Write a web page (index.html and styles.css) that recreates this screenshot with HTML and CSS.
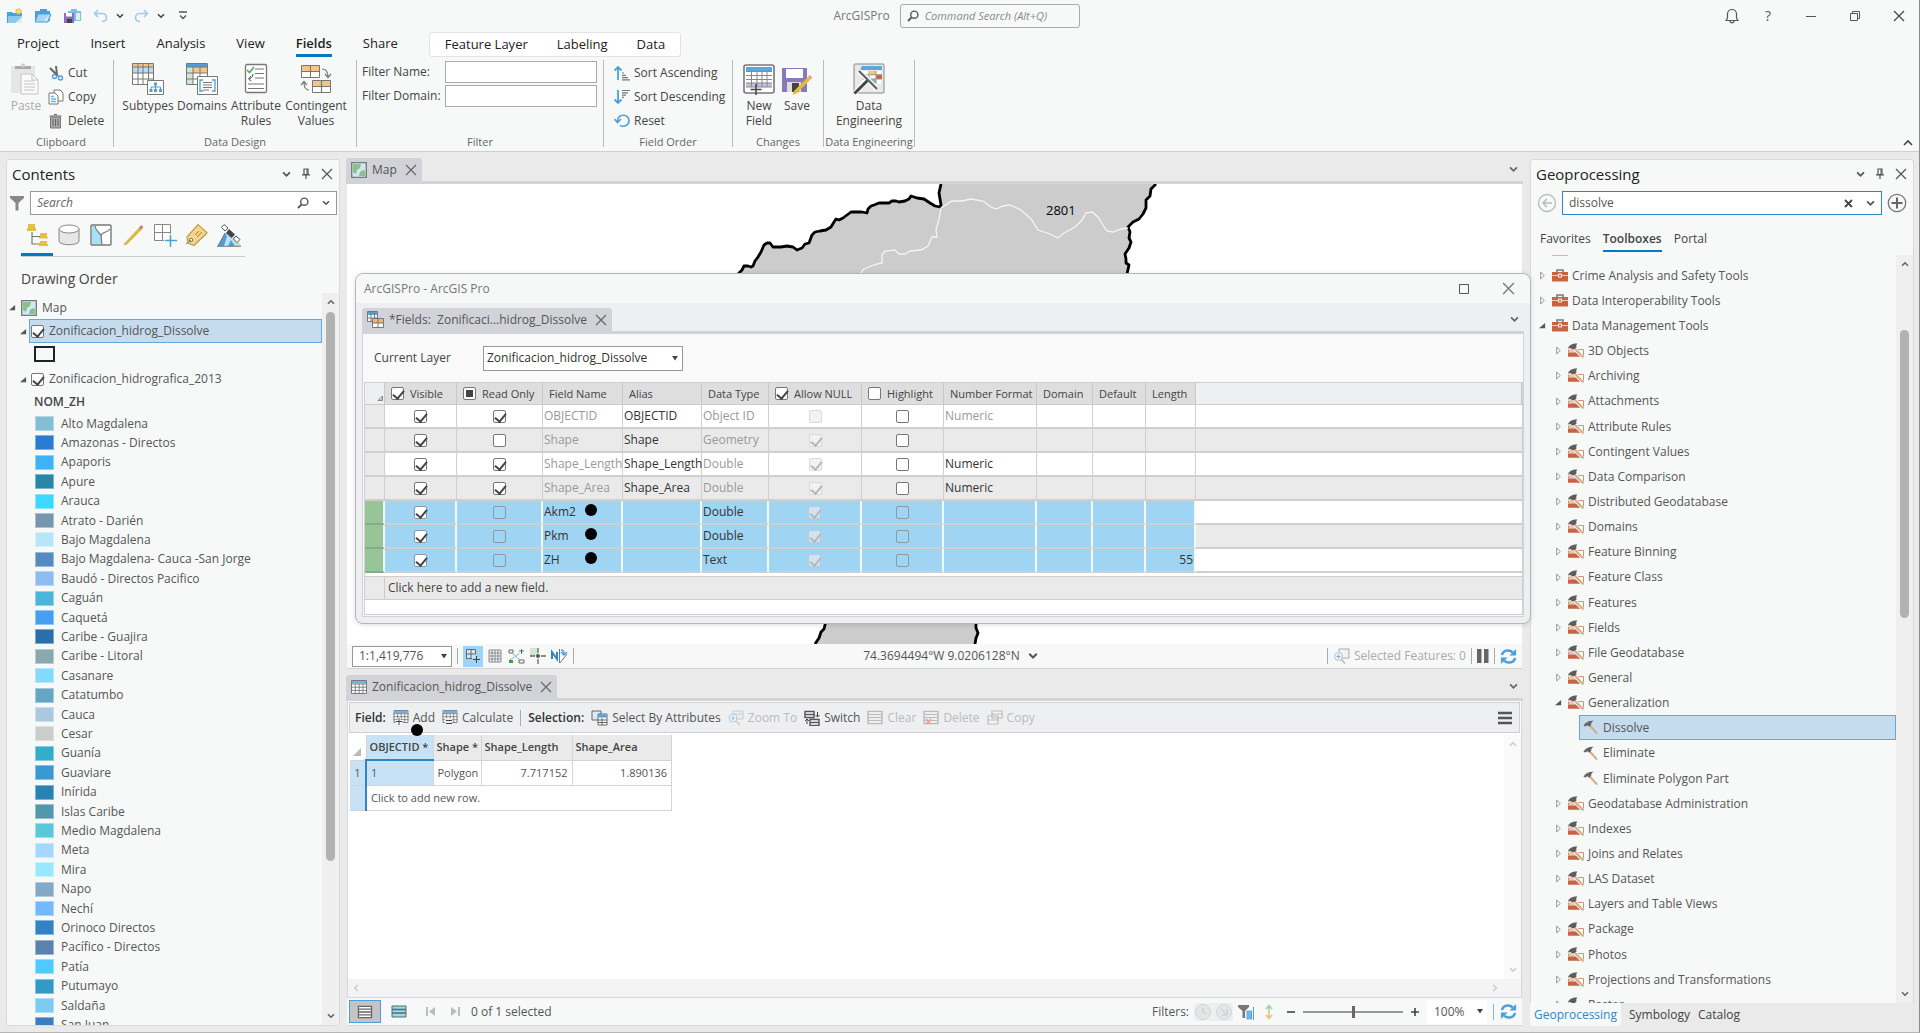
FILE: index.html
```html
<!DOCTYPE html>
<html lang="en">
<head>
<meta charset="utf-8">
<title>ArcGISPro</title>
<link rel="stylesheet" href="styles.css">
</head>
<body>
<svg class="defs" aria-hidden="true">
  <symbol id="chev" viewBox="0 0 8 8"><path d="M1 2.2l3 3 3-3" fill="none" stroke="currentColor" stroke-width="1.6"/></symbol>
  <symbol id="x" viewBox="0 0 12 12"><path d="M1 1l10 10m0-10L1 11" fill="none" stroke="currentColor" stroke-width="1.2"/></symbol>
  <symbol id="pin" viewBox="0 0 8 12"><path d="M2 1h4v5.5H2zM0 6.8h8M4 7v4" fill="none" stroke="currentColor" stroke-width="1.2"/><path d="M5 1v6" stroke="currentColor"/></symbol>
  <symbol id="lens" viewBox="0 0 12 12"><circle cx="7.3" cy="4.7" r="3.6" fill="none" stroke="currentColor" stroke-width="1.4"/><path d="M4.6 7.4L1 11" stroke="currentColor" stroke-width="1.8"/></symbol>
  <symbol id="refresh" viewBox="0 0 18 18"><path d="M2 7.5C3 2.5 9.500 1 13.500 4.600" fill="none" stroke="#4a9fdc" stroke-width="2.6"/><path d="M17 1v7h-7z" fill="#4a9fdc"/><path d="M16 10.500c-1 5-7.500 6.500-11.500 3" fill="none" stroke="#4a9fdc" stroke-width="2.600"/><path d="M1 17v-7h7z" fill="#4a9fdc"/></symbol>
  <symbol id="case" viewBox="0 0 16 14"><path d="M5 4V1.500h6V4" fill="none" stroke="#777" stroke-width="1.500"/><path d="M0 3.500h16V13H0z" fill="#c96442"/><path d="M0 7h16" stroke="#f0c9bb"/><path d="M6.500 5.500h3v3h-3z" fill="#c96442" stroke="#fff"/></symbol>
  <symbol id="set" viewBox="0 0 16 15"><path d="M10.500 6.500h5v7h-5z" fill="#fff" stroke="#d98c74"/><path d="M0 13.800V9.500h10l2 4.300z" fill="#c96442"/><path d="M.500 9V7H9v2z" fill="#fff" stroke="#d98c74"/><path d="M0 5.500C1 2 4.500 .300 9.500 .500 8.300 1.500 8 3 8.500 4.500L7.500 6H3.500L2.500 5z" fill="#5e5e5e"/><path d="M7 6l8.500 9" stroke="#fff" stroke-width="3.400"/><path d="M7 6l8.500 8.500" stroke="#d3ad80" stroke-width="2"/></symbol>
  <symbol id="hammer" viewBox="0 0 16 16"><path d="M6 5l8.500 9.500" stroke="#d3ad80" stroke-width="2.200"/><path d="M0 6C2 2 6 .500 11 .800 9 2 8 3 8.200 5L6 7.200 4 5.500 2 6.800z" fill="#666"/></symbol>
  <symbol id="closed" viewBox="0 0 6 10"><path d="M1 1.200v7.600L5 5z" fill="#fff" stroke="#888"/></symbol>
  <symbol id="open" viewBox="0 0 8 8"><path d="M7 1v6H0z" fill="#555"/></symbol>
  <symbol id="grid" viewBox="0 0 16 14"><path d="M.5.500h15v13H.500z" fill="#fff" stroke="#777"/><path d="M1 1h14v2.500H1z" fill="#6db3e2"/><path d="M0 4h16M0 7.200h16M0 10.400h16M4.300 4v10M8.200 4v10M12 4v10" stroke="#777" stroke-width=".9"/></symbol>
  <symbol id="rows" viewBox="0 0 16 15"><path d="M1 1.500h14v12H1z" fill="#fff" stroke="currentColor" stroke-width="1.400"/><path d="M1 4.500h14M1 7.500h14M1 10.500h14" stroke="currentColor" stroke-width="1.400"/></symbol>
  <symbol id="mapicon" viewBox="0 0 16 16"><path d="M.7.700h14.600v14.600H.700z" fill="#cfe8f7" stroke="#777" stroke-width="1.300"/><path d="M2 2h8L9 6l-3 2-1 4-3-2zM9 10l3-2 2 1v5H8z" fill="#8cbf8a"/></symbol>
</svg>

<div class="app">
<header class="titlebar">
  <div class="quick">
    <button class="ic" aria-label="New project"><svg width="16" height="16" viewBox="0 0 16 16"><path d="M0 4h5l1 1h9v10H0z" fill="#4a9fdc"/><path d="M1 8h14v7H1z" fill="#8cc8ee"/><path d="M8 15l7-6v6z" fill="#dff0e2"/><circle cx="11.500" cy="3.500" r="2.600" fill="#f6e27a" stroke="#d9b62c"/></svg></button>
    <button class="ic" aria-label="Open project"><svg width="17" height="15" viewBox="0 0 17 15"><path d="M0 3h5V1h7v2h3v10H0z" fill="#4a9fdc"/><path d="M3 6h13l-3 8H0z" fill="#a9d6f2" stroke="#4a9fdc"/><path d="M9 13l5-6-2 6z" fill="#dff0e2"/></svg></button>
    <button class="ic" aria-label="Save project"><svg width="17" height="16" viewBox="0 0 17 16"><path d="M4 3h3V1h6v2h4v10H4z" fill="#7dbde8"/><path d="M12 5h4v7h-4z" fill="#dff0e2"/><path d="M0 5h10v10H0z" fill="#8a6fb5"/><path d="M2 5h6v3.500H2z" fill="#fff"/><path d="M3 11h5v4H3z" fill="#444"/></svg></button>
    <button class="ic" aria-label="Undo"><svg width="15" height="14" viewBox="0 0 15 14"><path d="M5 1L1.500 4.500 5 8M1.500 4.500H9c6 0 6 8 0 8" fill="none" stroke="#a6c9e8" stroke-width="1.600"/></svg></button>
    <button class="ic arrow" aria-label="Undo list"><svg width="8" height="8"><use href="#chev"/></svg></button>
    <button class="ic" aria-label="Redo"><svg width="15" height="14" viewBox="0 0 15 14"><path d="M10 1l3.500 3.500L10 8m3.500-3.500H6c-6 0-6 8 0 8" fill="none" stroke="#a6c9e8" stroke-width="1.600"/></svg></button>
    <button class="ic arrow" aria-label="Redo list"><svg width="8" height="8"><use href="#chev"/></svg></button>
    <button class="ic custom" aria-label="Customize"><svg width="8" height="10" viewBox="0 0 8 10"><path d="M0 1h8M1 4.500l3 3 3-3" fill="none" stroke="#555" stroke-width="1.400"/></svg></button>
  </div>
  <div class="titlemid"><span>ArcGISPro</span>
    <label class="cmd"><svg width="12" height="12"><use href="#lens"/></svg><input type="text" placeholder="Command Search (Alt+Q)" aria-label="Command Search"></label>
  </div>
  <div class="wincontrols">
    <button class="ic" aria-label="Notifications"><svg width="14" height="16" viewBox="0 0 14 16"><path d="M1 12.500h12L11.500 10V6c0-6-9-6-9 0v4zM5 13c0 2.500 4 2.500 4 0" fill="none" stroke="#555" stroke-width="1.200"/></svg></button>
    <button class="ic help" aria-label="Help">?</button>
    <button class="ic" aria-label="Minimize"><svg width="12" height="12" viewBox="0 0 12 12"><path d="M1 6.500h10" stroke="#555"/></svg></button>
    <button class="ic" aria-label="Restore"><svg width="12" height="12" viewBox="0 0 12 12"><path d="M1.500 3.500h7v7h-7zM3.500 3V1.500h7v7H9" fill="none" stroke="#555"/></svg></button>
    <button class="ic" aria-label="Close"><svg width="12" height="12"><use href="#x"/></svg></button>
  </div>
</header>

<nav class="tabs">
  <a href="#">Project</a><a href="#">Insert</a><a href="#">Analysis</a><a href="#">View</a><a href="#" class="on">Fields</a><a href="#">Share</a>
  <div class="ctx"><a href="#">Feature Layer</a><a href="#">Labeling</a><a href="#">Data</a></div>
</nav>

<section class="ribbon">
  <div class="group g-clip"><div class="tools">
    <button class="big dim"><svg width="32" height="32" viewBox="0 0 32 32"><path d="M1 3h24v27H1z" fill="#e4e6e7"/><path d="M5 3h16v3H5z" fill="#aaa"/><circle cx="13" cy="2.500" r="2" fill="#ccc"/><path d="M11 11h11l6 6v14H11z" fill="#fafafa" stroke="#c4c4c4"/><path d="M22 11v6h6M14 18h10M14 21h11M14 24h11M14 27h11" fill="none" stroke="#c4c4c4"/></svg>Paste</button>
    <div class="smalls">
      <button class="small"><svg width="16" height="16" viewBox="0 0 16 16"><path d="M2 3l8 8M8 1l1 9" stroke="#666" stroke-width="2"/><circle cx="6.500" cy="11.500" r="2" fill="none" stroke="#4a9fdc" stroke-width="1.300"/><circle cx="12.500" cy="13" r="2" fill="none" stroke="#4a9fdc" stroke-width="1.300"/></svg>Cut</button>
      <button class="small"><svg width="16" height="16" viewBox="0 0 16 16"><path d="M6 1h6l3 3v8H6z" fill="#fff" stroke="#777"/><path d="M1 4h6l3 3v8H1z" fill="#fff" stroke="#777"/><path d="M3 7.500h3M3 10h5M3 12.500h5" stroke="#6db3e2" stroke-width="1.500"/></svg>Copy</button>
      <button class="small"><svg width="16" height="16" viewBox="0 0 16 16"><path d="M2.500 4h10v11h-10z" fill="#aaa" stroke="#777"/><path d="M1.500 3h12M6 1.500h3M5 6v7M7.500 6v7M10 6v7" stroke="#666"/></svg>Delete</button>
    </div></div><h3>Clipboard</h3></div>

  <div class="group g-design"><div class="tools">
    <button class="big"><svg width="32" height="32" viewBox="0 0 32 32"><path d="M.5.500h21v21H.500z" fill="#fff" stroke="#777"/><path d="M1 1h20v3H1z" fill="#f5c585"/><path d="M1 4h20v6H1z" fill="#b9dcf2"/><path d="M0 4h22M0 10h22M0 16h22M6 0v22M11 0v22M16.500 0v22" stroke="#777"/><path d="M15.500 17.500h16v14h-16z" fill="#fff" stroke="#777"/><path d="M22 19.500h3v3h-3zM17.500 26h3v3h-3zM22 26h3v3h-3zM27 26h3v3h-3z" fill="#4a9fdc"/><path d="M19 26v-2h9.500v2M23.500 22v4" fill="none" stroke="#4a9fdc"/></svg>Subtypes</button>
    <button class="big"><svg width="32" height="32" viewBox="0 0 32 32"><path d="M.5.500h21v21H.500z" fill="#fff" stroke="#777"/><path d="M1 1h20v3H1z" fill="#4a9fdc"/><path d="M1 4h6v17H1z" fill="#cfe8cf"/><path d="M7 4h14v6H7z" fill="#f5c585"/><path d="M0 4h22M0 10h22M0 16h22M7 4v18M14 4v18" stroke="#777"/><path d="M11.500 13.500h20v18h-20z" fill="#fff" stroke="#777"/><path d="M17 17h-3v11h3M26 17h3v11h-3" fill="none" stroke="#4a9fdc" stroke-width="1.300"/><path d="M17 19.500h9M17 22h9M17 24.500h9M17 27h6" stroke="#777"/></svg>Domains</button>
    <button class="big"><svg width="32" height="32" viewBox="0 0 32 32"><rect x="5.500" y="1.500" width="21" height="28" rx="1.500" fill="#fff" stroke="#777" stroke-width="1.300"/><path d="M7 7l2.500 2.500L14 4" fill="none" stroke="#55a95a" stroke-width="1.600"/><path d="M15 6h9M15 10.500h9M15 15h9M8 21h16M8 25.500h16" stroke="#777" stroke-width="1.200"/><path d="M13 11c0 3-3 5-4 5m2-3l-2.500 3 3 2" fill="none" stroke="#555"/></svg>Attribute Rules</button>
    <button class="big"><svg width="32" height="32" viewBox="0 0 32 32"><path d="M1.500 2.500h18v12h-18z" fill="#fff" stroke="#777"/><path d="M2 3h17v5.500H2z" fill="#f5c585"/><path d="M1 8.500h19M10.500 2v13" stroke="#777"/><path d="M12.500 17.500h18v12h-18z" fill="#fff" stroke="#777"/><path d="M13 18h17v5.500H13z" fill="#f5c585"/><path d="M12 23.500h19M21.500 17v13M22 6c4 0 6 3 6 8m-3-3l3 3.500 3-3.500M9 27c-4 0-5-4-5-8m-3 3l3-3.500L7 22" fill="none" stroke="#777" stroke-width="1.200"/></svg>Contingent Values</button>
  </div><h3>Data Design</h3></div>

  <div class="group g-filter"><div class="filters">
    <label for="fn">Filter Name:</label><input id="fn" type="text">
    <label for="fd">Filter Domain:</label><input id="fd" type="text">
  </div><h3>Filter</h3></div>

  <div class="group g-order"><div class="tools"><div class="smalls">
    <button class="small"><svg width="16" height="16" viewBox="0 0 16 16"><path d="M4 15V2M.500 5.500L4 2l3.500 3.500" fill="none" stroke="#4a9fdc" stroke-width="1.800"/><path d="M8 8h2M8 10.300h4M8 12.600h6M8 14.900h8" stroke="#777" stroke-width="1.200"/></svg>Sort Ascending</button>
    <button class="small"><svg width="16" height="16" viewBox="0 0 16 16"><path d="M4 1v13M.500 10.500L4 14l3.500-3.500" fill="none" stroke="#4a9fdc" stroke-width="1.800"/><path d="M8 1.500h8M8 3.800h6M8 6.100h4M8 8.400h2" stroke="#777" stroke-width="1.200"/></svg>Sort Descending</button>
    <button class="small"><svg width="16" height="16" viewBox="0 0 16 16"><path d="M3.500 8.500C3.500-.5 15 1 15 7.500S7 14 6 12M.500 6l3 3.500L7 6" fill="none" stroke="#4a9fdc" stroke-width="1.600"/></svg>Reset</button>
  </div></div><h3>Field Order</h3></div>

  <div class="group g-changes"><div class="tools">
    <button class="big"><svg width="32" height="32" viewBox="0 0 32 32"><rect x="1" y="2" width="30" height="28" rx="2" fill="#fff" stroke="#777" stroke-width="1.600"/><path d="M3 4h26v4H3z" fill="#5aa7dd"/><path d="M3 20h26v4H3z" fill="#c9bfe0"/><path d="M3 8.500h26M3 12.500h26M3 16.500h26M3 20h26M3 24h26M8.500 8v16M14 8v16M19 8v16M24 8v16" stroke="#888"/><path d="M13 21v11M7.500 26.500h11" stroke="#444" stroke-width="1.500"/></svg>New Field</button>
    <button class="big"><svg width="32" height="32" viewBox="0 0 32 32"><path d="M1 5h25v24H1z" fill="#8a78bd"/><path d="M5 6h17v9H5z" fill="#fff"/><path d="M6 19h14v10H6z" fill="#ddd"/><path d="M11 20h7v9h-7z" fill="#444"/><path d="M27 14l-14 14-1.500 4 4-1.500L29.500 16.500z" fill="#e3bd3a"/><path d="M27 14l1.500-2 3 2.500-2 2z" fill="#e59a8a"/></svg>Save</button>
  </div><h3>Changes</h3></div>

  <div class="group g-eng"><div class="tools">
    <button class="big"><svg width="32" height="32" viewBox="0 0 32 32"><rect x="1" y="1" width="30" height="29" rx="1" fill="#e9e9e9" stroke="#888"/><path d="M9 3h20v4H7z" fill="#5aa7dd"/><path d="M9 8h19v13H9z" fill="#fff"/><path d="M17 8h6v4h-6z" fill="#e8d24b"/><path d="M23 11.500h6v4.500h-6z" fill="#cf5f3f"/><path d="M17 16h6v4h-6z" fill="#8cbf8a"/><path d="M16 8v13M23 8v13M9 11.800h20M9 16h20" stroke="#999"/><path d="M2 30L15 16M6 8l18 18" stroke="#fff" stroke-width="5"/><path d="M1.500 30.500L15 17" stroke="#444" stroke-width="3"/><path d="M6 8l18 18" stroke="#666" stroke-width="2.400"/></svg>Data Engineering</button>
  </div><h3>Data Engineering</h3></div>
  <button class="ic collapse" aria-label="Collapse ribbon"><svg width="10" height="8" viewBox="0 0 10 8"><path d="M1 6l4-4 4 4" fill="none" stroke="#444" stroke-width="1.600"/></svg></button>
</section>

<main class="work">
<aside class="panel contents">
  <div class="phead"><h2>Contents</h2><button class="ic" aria-label="Options"><svg width="9" height="9"><use href="#chev"/></svg></button><button class="ic" aria-label="Pin"><svg width="8" height="12"><use href="#pin"/></svg></button><button class="ic" aria-label="Close"><svg width="12" height="12"><use href="#x"/></svg></button></div>
  <div class="csearch"><button class="ic" aria-label="Filter"><svg width="14" height="16" viewBox="0 0 14 16"><path d="M0 1h14v2L8.500 8v7.500h-3V8L0 3z" fill="#888"/></svg></button>
    <div class="sbox"><input type="text" placeholder="Search" aria-label="Search contents"><svg width="12" height="12"><use href="#lens"/></svg><svg width="8" height="8"><use href="#chev"/></svg></div></div>
  <div class="ctabs">
    <button class="on" aria-label="List by drawing order"><svg width="24" height="24" viewBox="0 0 24 24"><path d="M7 9v12h8M7 13.500h8" fill="none" stroke="#777" stroke-width="1.200"/><path d="M3 1h7v4h1v3H2V5h1zM15 10h7v4h1v1.500h-9V14h1zM15 18h7v3h1v2h-9v-2h1z" fill="#e3c13f"/></svg></button>
    <button aria-label="List by source"><svg width="24" height="24" viewBox="0 0 24 24"><path d="M2 6v12c0 5 20 5 20 0V6" fill="#e6e6e6" stroke="#888"/><ellipse cx="12" cy="6" rx="10" ry="4" fill="#fff" stroke="#888"/></svg></button>
    <button aria-label="List by selection"><svg width="24" height="24" viewBox="0 0 24 24"><rect x="2" y="2" width="20" height="20" rx="1" fill="#fff" stroke="#777" stroke-width="1.400"/><path d="M3 3h3c1 6 5 6 6 10s0 5 1 8H3z" fill="#a4e2f5"/><path d="M6 3c1 6 5 6 6 10s0 5 1 8M12 13c1-5 7-3 9-7" fill="none" stroke="#777" stroke-width="1.200"/></svg></button>
    <button aria-label="List by editing"><svg width="24" height="24" viewBox="0 0 24 24"><path d="M4 20L18 5l2 2L6 21l-3 1z" fill="#e3bd3a" stroke="#c39b25" stroke-width=".5"/><path d="M18 5l2-3 2.500 2L20 7z" fill="#cf7a6b"/></svg></button>
    <button aria-label="List by snapping"><svg width="24" height="24" viewBox="0 0 24 24"><path d="M1.500 1.500h16v16h-16zM9.500 1v17M1 9.500h17" fill="#fff" stroke="#888"/><path d="M17.500 11v13M11 17.500h13" stroke="#fff" stroke-width="4"/><path d="M17.500 12v12M12 17.500h12" stroke="#4a9fdc" stroke-width="1.600"/></svg></button>
    <button aria-label="List by labeling"><svg width="24" height="24" viewBox="0 0 24 24"><path d="M2 14L13 1.500 22 9.500 21 11 9 22.500 3 20z" fill="#f4d58c" stroke="#c39b45" stroke-width="1.200"/><circle cx="6" cy="17" r="1.700" fill="#fff" stroke="#777"/><path d="M10 12l4-4M12 14l5-5M6 17l-5 4" stroke="#9b834a"/></svg></button>
    <button aria-label="List by imagery"><svg width="24" height="24" viewBox="0 0 24 24"><path d="M1 23L8 10h7l9 13z" fill="#bfe0f3"/><path d="M1 23l7-13 2 3-3 10z" fill="#4a9fdc"/><path d="M11 23l3-6 4 6z" fill="#4a9fdc"/><path d="M17 23l3-6 4 6z" fill="#bfe0c0"/><path d="M1 23L8 10M0 23.300h24" stroke="#777"/><path d="M7 1.500l4 3.500-3 3-3.500-3.500zM19 13l4 3.500-3 3-3.500-3.500z" fill="#fff" stroke="#555"/><path d="M12 6l6 5.500-3.500 3.500-5.500-5z" fill="#444"/></svg></button>
  </div>
  <h4>Drawing Order</h4>
  <div class="scrollrow">
  <div class="ctree">
    <div class="crow lvl0"><svg width="7" height="7"><use href="#open"/></svg><svg width="16" height="16"><use href="#mapicon"/></svg><span>Map</span></div>
    <div class="crow lvl1"><svg width="7" height="7"><use href="#open"/></svg><label class="sel"><input type="checkbox" checked>Zonificacion_hidrog_Dissolve</label></div>
    <div class="symbol"><i></i></div>
    <div class="crow lvl1"><svg width="7" height="7"><use href="#open"/></svg><label><input type="checkbox" checked>Zonificacion_hidrografica_2013</label></div>
    <div class="field">NOM_ZH</div>
    <ul class="legend">
      <li><i style="background:#82bed6"></i>Alto Magdalena</li>
      <li><i style="background:#2a7bd2"></i>Amazonas - Directos</li>
      <li><i style="background:#40b2f8"></i>Apaporis</li>
      <li><i style="background:#2a86a8"></i>Apure</li>
      <li><i style="background:#3cd8ff"></i>Arauca</li>
      <li><i style="background:#7696b0"></i>Atrato - Darién</li>
      <li><i style="background:#b6e6f8"></i>Bajo Magdalena</li>
      <li><i style="background:#568bc0"></i>Bajo Magdalena- Cauca -San Jorge</li>
      <li><i style="background:#8cbdf0"></i>Baudó - Directos Pacifico</li>
      <li><i style="background:#4ab4dc"></i>Caguán</li>
      <li><i style="background:#469ff2"></i>Caquetá</li>
      <li><i style="background:#2a6eaa"></i>Caribe - Guajira</li>
      <li><i style="background:#8aa8b0"></i>Caribe - Litoral</li>
      <li><i style="background:#84d9ff"></i>Casanare</li>
      <li><i style="background:#64a6c4"></i>Catatumbo</li>
      <li><i style="background:#abc9de"></i>Cauca</li>
      <li><i style="background:#cacccd"></i>Cesar</li>
      <li><i style="background:#34acca"></i>Guanía</li>
      <li><i style="background:#3a98d2"></i>Guaviare</li>
      <li><i style="background:#2a82b2"></i>Inírida</li>
      <li><i style="background:#5298ac"></i>Islas Caribe</li>
      <li><i style="background:#5ac8da"></i>Medio Magdalena</li>
      <li><i style="background:#a6d8ff"></i>Meta</li>
      <li><i style="background:#96e9ff"></i>Mira</li>
      <li><i style="background:#82aac6"></i>Napo</li>
      <li><i style="background:#74b8ff"></i>Nechí</li>
      <li><i style="background:#3482c6"></i>Orinoco Directos</li>
      <li><i style="background:#5a82ae"></i>Pacífico - Directos</li>
      <li><i style="background:#50caff"></i>Patía</li>
      <li><i style="background:#329ac4"></i>Putumayo</li>
      <li><i style="background:#7ecaf2"></i>Saldaña</li>
      <li><i style="background:#3a7ec0"></i>San Juan</li>
    </ul>
  </div>
  <div class="vbar"><svg width="8" height="8" class="up"><use href="#chev"/></svg><div class="thumb long"></div><svg width="8" height="8"><use href="#chev"/></svg></div>
  </div>
</aside>

<section class="center">
  <div class="dtabs"><div class="dtab"><svg width="16" height="16"><use href="#mapicon"/></svg>Map<button class="ic" aria-label="Close map"><svg width="12" height="12"><use href="#x"/></svg></button></div><button class="ic more" aria-label="Map tabs"><svg width="9" height="9"><use href="#chev"/></svg></button></div>
  <div class="mapview">
    <svg viewBox="0 0 1175 460" preserveAspectRatio="xMinYMin slice">
      <path d="M594 0L592 9 594 21 593 23 583 19 577 15 564 12 558 17 552 18 545 17 538 19 524 22 520 29 504 28 496 34 489 35 484 43 479 46 465 49 462 59 450 66 440 62 426 63 420 59 411 73 404 83 397 82 391 90 479 439 474 448 468 460H628L631 449 629 439 780 90 782 81 779 76 779 68 784 58 783 48 781 43 792 35 798 24 799 16 802 13 804 5 809 0z" fill="#ccc"/>
      <path d="M594 0L592 9 594 21 593 23 588 22 583 19 577 15 570 14 564 12 562 15 558 17 552 18 549 17 545 17 542 19 538 19 532 19 527 21 524 22 521 25 520 29 515 28 504 28 500 31 496 34 492 36 489 35 487 38 484 43 479 46 473 47 468 48 465 51 462 59 458 60 455 64 450 66 446 63 440 62 434 63 426 63 423 59 420 59 417 61 414 68 411 73 408 77 406 82 404 83 401 82 397 82 395 86 391 90M809 0L804 5 803 12 799 16 799 24 796 30 792 35 786 38 781 43 783 48 782 54 784 58 782 64 778 70 779 75 779 79 782 81 780 90M479 437L477 445 474 448 472 454 468 460M629 437L629 444 631 449 629 454 628 460" fill="none" stroke="#000" stroke-width="2.800" stroke-linejoin="round"/>
      <path d="M513 90L517 85 524 82 530 80 535 79 535 71 538 67 548 66 552 70 558 70 563 67 574 66 581 62 585 53 590 53 589 46 592 35 594 24 605 17 615 17 624 15 636 17 644 23 649 25 656 22 663 21 674 26 684 35 691 46 703 50 711 54 717 49 728 43 735 36 739 29 745 28 751 33 757 43 760 47 766 48 774 45 781 44" fill="none" stroke="#f4f4f4" stroke-width="1.300"/>
      <text x="699" y="31">2801</text>
    </svg>
  </div>
  <div class="mapbar">
    <select aria-label="Map scale"><option>1:1,419,776</option></select>
    <span class="sep"></span>
    <button class="ic act" aria-label="Snapping"><svg width="16" height="16" viewBox="0 0 16 16"><path d="M1.500 1.500h9v9h-9zM6 1v10M1 6h10" fill="#cfe8f7" stroke="#666"/><path d="M11.500 6v10M7 11.500h9" stroke="#9fd4f5" stroke-width="3"/><path d="M11.500 8v7M8 11.500h7" stroke="#444"/></svg></button>
    <button class="ic" aria-label="Grid"><svg width="15" height="15" viewBox="0 0 15 15"><path d="M1 1h12v12H1zM4 1v12M7 1v12M10 1v12M1 4h12M1 7h12M1 10h12" fill="none" stroke="#888"/></svg></button>
    <button class="ic" aria-label="Inference"><svg width="17" height="16" viewBox="0 0 17 16"><path d="M1 2h4v3H1zM11 3h5M13.500 1v5M11 12h5v3h-5z" fill="none" stroke="#666"/><path d="M2 12L12 5M5 6l7 6" stroke="#4a9fdc" stroke-dasharray="2 1"/><path d="M1 12h4v3H1z" fill="#3f9d4a"/></svg></button>
    <button class="ic" aria-label="Corrections"><svg width="16" height="16" viewBox="0 0 16 16"><path d="M0 0h8v8H0z" fill="#cfe8cf"/><path d="M8 0v5M8 11v5M0 8h5M11 8h5" stroke="#666" stroke-width="1.300"/><circle cx="8" cy="8" r="2" fill="#555"/></svg></button>
    <button class="ic" aria-label="North"><svg width="17" height="16" viewBox="0 0 17 16"><path d="M1 11V4l5 7V4" fill="none" stroke="#2f86c6" stroke-width="2"/><path d="M8.500 1v14M9 15l7-9" stroke="#777"/><path d="M10 2c3 0 3 2 3 4m-3-2l3 3 3-3" fill="none" stroke="#4a9fdc" stroke-width="1.400"/></svg></button>
    <span class="sep"></span>
    <button class="coords">74.3694494°W 9.0206128°N <svg width="10" height="10"><use href="#chev"/></svg></button>
    <span class="sep"></span>
    <button class="selfeat"><svg width="17" height="16" viewBox="0 0 17 16"><path d="M6 1h10v9H6z" fill="#eef2f3" stroke="#aaa"/><circle cx="5.500" cy="8.500" r="4" fill="#eaf5fb" stroke="#9fc9e6"/><path d="M3.500 8.500h4M5.500 6.500v4" stroke="#9ab"/><path d="M8.500 11.500l3.500 4" stroke="#e5b08c" stroke-width="1.600"/></svg>Selected Features: 0</button>
    <span class="sep"></span>
    <button class="ic" aria-label="Pause"><svg width="12" height="14" viewBox="0 0 12 14"><path d="M0 0h4.500v14H0zM7 0h4.500v14H7z" fill="#666"/></svg></button>
    <span class="sep"></span>
    <button class="ic" aria-label="Refresh map"><svg width="17" height="17"><use href="#refresh"/></svg></button>
  </div>

  <div class="dtabs second"><div class="dtab"><svg width="16" height="14"><use href="#grid"/></svg>Zonificacion_hidrog_Dissolve<button class="ic" aria-label="Close table"><svg width="12" height="12"><use href="#x"/></svg></button></div><button class="ic more" aria-label="Table tabs"><svg width="9" height="9"><use href="#chev"/></svg></button></div>
  <div class="tpane">
    <div class="ttools">
      <b class="first">Field:</b>
      <button class="tb add"><svg width="16" height="15" viewBox="0 0 16 15"><use href="#grid" width="16" height="13"/><path d="M6 8v7M2.500 11.500h7" stroke="#fff" stroke-width="3"/><path d="M6 8v7M2.500 11.500h7" stroke="#444"/></svg>Add<i class="dot"></i></button>
      <button class="tb calc"><svg width="16" height="15" viewBox="0 0 16 15"><use href="#grid" width="16" height="13"/><path d="M3 8.500h7v6H3z" fill="#eee"/><path d="M4 10.500h6M4 13.500h6" stroke="#444"/></svg>Calculate</button>
      <span class="sep"></span>
      <b>Selection:</b>
      <button class="tb"><svg width="17" height="16" viewBox="0 0 17 16"><path d="M1 1h9v9H1z" fill="#d8ecf8" stroke="#666"/><path d="M7 4h9v11H7z" fill="#fff" stroke="#666"/><path d="M7.500 4.500h8v3h-8z" fill="#4a9fdc"/><path d="M7 10h9M7 12.500h9M11 8v7" stroke="#666"/></svg>Select By Attributes</button>
      <button class="tb off"><svg width="16" height="16" viewBox="0 0 16 16"><path d="M5 1h10v8H5zM5 4h10" fill="#eee" stroke="#ccc"/><circle cx="5" cy="8" r="4" fill="#eaf5fb" stroke="#a8cfe8"/><path d="M3 8h4M5 6v4" stroke="#a8bfd0"/><path d="M8 11l4 4" stroke="#ecc4a8" stroke-width="1.600"/></svg>Zoom To</button>
      <button class="tb"><svg width="16" height="16" viewBox="0 0 16 16"><path d="M1 1.500h9v6H1zM1 4.500h9M6 9.500h9v6H6zM6 12.500h9" fill="#fff" stroke="#555" stroke-width="1.400"/><path d="M13.500 2v5m-2-2l2 2 2-2M3 14V9M1 11l2-2 2 2" fill="none" stroke="#444"/></svg>Switch</button>
      <button class="tb off"><svg width="16" height="15"><use href="#rows"/></svg>Clear</button>
      <button class="tb off"><svg width="16" height="15" viewBox="0 0 16 15"><use href="#rows"/><path d="M3 9l5 5m0-5l-5 5" stroke="#ee9d8c" stroke-width="1.600"/></svg>Delete</button>
      <button class="tb off"><svg width="16" height="15" viewBox="0 0 16 15"><path d="M5 1h10v7H5zM5 4h10M1 6h10v8H1zM1 10h10" fill="#f4f4f4" stroke="#bbb" stroke-width="1.200"/></svg>Copy</button>
      <button class="ic menu" aria-label="Menu"><svg width="14" height="14" viewBox="0 0 14 14"><path d="M0 2h14M0 7h14M0 12h14" stroke="#555" stroke-width="2.400"/></svg></button>
    </div>
    <div class="tbody">
      <div class="tscroll">
        <table class="attrs">
          <thead><tr><th class="rh"><svg width="8" height="8" viewBox="0 0 8 8"><path d="M8 0v8H0z" fill="#bbb"/></svg></th><th class="key">OBJECTID *</th><th class="shape">Shape *</th><th class="len">Shape_Length</th><th class="area">Shape_Area</th></tr></thead>
          <tbody><tr><td class="rh">1</td><td class="key">1</td><td>Polygon</td><td class="num">7.717152</td><td class="num">1.890136</td></tr>
          <tr><td class="rh"></td><td colspan="4">Click to add new row.</td></tr></tbody>
        </table>
      </div>
      <div class="vbar faint"><svg width="8" height="8" class="up"><use href="#chev"/></svg><svg width="8" height="8"><use href="#chev"/></svg></div>
    </div>
    <div class="hbar"><svg width="8" height="8" class="lf"><use href="#chev"/></svg><svg width="8" height="8" class="rt"><use href="#chev"/></svg></div>
  </div>
  <div class="tstatus">
    <button class="view on" aria-label="Show all records"><svg width="16" height="14"><use href="#rows"/></svg></button>
    <button class="view" aria-label="Show selected records"><svg width="16" height="13" viewBox="0 0 16 13"><path d="M1 1h14v11H1z" fill="#8fdcf5" stroke="#666"/><path d="M1 4.500h14M1 8h14" stroke="#666" stroke-width="1.400"/></svg></button>
    <button class="ic nav" aria-label="First"><svg width="10" height="9" viewBox="0 0 10 9"><path d="M1 0v9" stroke="#aaa" stroke-width="1.500"/><path d="M9 0v9L3 4.500z" fill="#bbb"/></svg></button>
    <button class="ic nav" aria-label="Last"><svg width="10" height="9" viewBox="0 0 10 9"><path d="M9 0v9" stroke="#aaa" stroke-width="1.500"/><path d="M1 0v9l6-4.500z" fill="#bbb"/></svg></button>
    <span>0 of 1 selected</span>
    <span class="fl">Filters:</span>
    <div class="flt"><button class="ic" aria-label="Time filter"><svg width="18" height="18" viewBox="0 0 18 18"><circle cx="9" cy="9" r="7.500" fill="#e2e6e6" stroke="#d2d6d6"/><path d="M9 5v4l3 2" fill="none" stroke="#c2c6c6"/></svg></button><button class="ic" aria-label="Range filter"><svg width="18" height="18" viewBox="0 0 18 18"><circle cx="9" cy="9" r="7.500" fill="#e2e6e6" stroke="#d2d6d6"/><path d="M6 6l6 6m0-6v6H7" fill="none" stroke="#c6caca"/></svg></button></div>
    <button class="ic" aria-label="Extent filter"><svg width="18" height="16" viewBox="0 0 18 16"><path d="M0 1h11v2L7 7v7H4.500V7L0 3z" fill="#777"/><path d="M9 7h2v8H9zM12 7h1.500v8H12zM15.500 3v13" stroke="#4a9fdc" fill="#9fd4f5"/></svg></button>
    <button class="ic" aria-label="Row height"><svg width="10" height="16" viewBox="0 0 10 16"><path d="M5 2v6M2 5l3-3.500L8 5" stroke="#a9cfa4" stroke-width="1.600" fill="none"/><path d="M5 8v6M2 11l3 3.500L8 11" stroke="#ecc084" stroke-width="1.600" fill="none"/></svg></button>
    <button class="ic minus" aria-label="Zoom out"><svg width="8" height="8" viewBox="0 0 8 8"><path d="M0 4h8" stroke="#444" stroke-width="1.600"/></svg></button>
    <input type="range" class="zoom" min="0" max="100" value="50" aria-label="Zoom level">
    <button class="ic" aria-label="Zoom in"><svg width="8" height="8" viewBox="0 0 8 8"><path d="M0 4h8M4 0v8" stroke="#444" stroke-width="1.600"/></svg></button>
    <select class="pct" aria-label="Zoom percent"><option>100%</option></select>
    <span class="sep"></span>
    <button class="ic" aria-label="Refresh table"><svg width="17" height="17"><use href="#refresh"/></svg></button>
  </div>

  <section class="dialog" role="dialog" aria-label="ArcGISPro - ArcGIS Pro">
    <div class="dhead"><span>ArcGISPro - ArcGIS Pro</span><button class="ic" aria-label="Maximize"><svg width="12" height="12" viewBox="0 0 12 12"><path d="M1.500 1.500h9v9h-9z" fill="none" stroke="#555"/></svg></button><button class="ic" aria-label="Close dialog"><svg width="13" height="13"><use href="#x"/></svg></button></div>
    <div class="dtabs"><div class="dtab"><svg width="17" height="17" viewBox="0 0 17 17"><path d="M.5.500h10v10H.500z" fill="#fff" stroke="#777"/><path d="M1 1h9v3H1z" fill="#5aa7dd"/><path d="M0 7h11M4 0v11M7.500 0v11" stroke="#777"/><path d="M5.500 7.500h11v9h-11z" fill="#fff" stroke="#777"/><path d="M6 8h10v4H6z" fill="#f5b56a"/><path d="M5 12h12M11 7v10" stroke="#777"/></svg>*Fields:&nbsp; Zonificaci...hidrog_Dissolve<button class="ic" aria-label="Close fields"><svg width="12" height="12"><use href="#x"/></svg></button></div><button class="ic more" aria-label="Fields tabs"><svg width="9" height="9"><use href="#chev"/></svg></button></div>
    <div class="dbody">
      <div class="layerrow"><label for="layer">Current Layer</label><select id="layer"><option>Zonificacion_hidrog_Dissolve</option></select></div>
      <div class="fwrap">
      <table class="fields">
        <colgroup><col class="w20"><col class="w72"><col class="w86"><col class="w80"><col class="w79"><col class="w67"><col class="w93"><col class="w82"><col class="w93"><col class="w56"><col class="w53"><col class="w50"><col></colgroup>
        <thead><tr><th class="corner"><svg width="6" height="6" viewBox="0 0 6 6"><path d="M5.500 1v4.500H1z" fill="#ccc" stroke="#888"/></svg></th>
          <th><label><input type="checkbox" checked>Visible</label></th><th><label><input type="checkbox" class="mixed">Read Only</label></th><th>Field Name</th><th>Alias</th><th>Data Type</th><th><label><input type="checkbox" checked>Allow NULL</label></th><th><label><input type="checkbox">Highlight</label></th><th>Number Format</th><th>Domain</th><th>Default</th><th>Length</th><th class="rest"></th></tr></thead>
        <tbody>
          <tr><td class="rh"></td><td class="c"><input type="checkbox" checked aria-label="Visible"></td><td class="c"><input type="checkbox" checked aria-label="Read only"></td><td class="ro">OBJECTID</td><td>OBJECTID</td><td class="ro">Object ID</td><td class="c"><input type="checkbox" disabled aria-label="Allow NULL"></td><td class="c"><input type="checkbox" aria-label="Highlight"></td><td class="ro">Numeric</td><td></td><td></td><td></td><td class="rest"></td></tr>
          <tr><td class="rh"></td><td class="c"><input type="checkbox" checked aria-label="Visible"></td><td class="c"><input type="checkbox" aria-label="Read only"></td><td class="ro">Shape</td><td>Shape</td><td class="ro">Geometry</td><td class="c"><input type="checkbox" checked disabled aria-label="Allow NULL"></td><td class="c"><input type="checkbox" aria-label="Highlight"></td><td></td><td></td><td></td><td></td><td class="rest"></td></tr>
          <tr><td class="rh"></td><td class="c"><input type="checkbox" checked aria-label="Visible"></td><td class="c"><input type="checkbox" checked aria-label="Read only"></td><td class="ro">Shape_Length</td><td>Shape_Length</td><td class="ro">Double</td><td class="c"><input type="checkbox" checked disabled aria-label="Allow NULL"></td><td class="c"><input type="checkbox" aria-label="Highlight"></td><td>Numeric</td><td></td><td></td><td></td><td class="rest"></td></tr>
          <tr><td class="rh"></td><td class="c"><input type="checkbox" checked aria-label="Visible"></td><td class="c"><input type="checkbox" checked aria-label="Read only"></td><td class="ro">Shape_Area</td><td>Shape_Area</td><td class="ro">Double</td><td class="c"><input type="checkbox" checked disabled aria-label="Allow NULL"></td><td class="c"><input type="checkbox" aria-label="Highlight"></td><td>Numeric</td><td></td><td></td><td></td><td class="rest"></td></tr>
          <tr class="new"><td class="rh"></td><td class="c"><input type="checkbox" checked aria-label="Visible"></td><td class="c"><input type="checkbox" aria-label="Read only"></td><td class="mark">Akm2<i class="dot"></i></td><td></td><td>Double</td><td class="c"><input type="checkbox" checked disabled aria-label="Allow NULL"></td><td class="c"><input type="checkbox" aria-label="Highlight"></td><td></td><td></td><td></td><td></td><td class="rest"></td></tr>
          <tr class="new"><td class="rh"></td><td class="c"><input type="checkbox" checked aria-label="Visible"></td><td class="c"><input type="checkbox" aria-label="Read only"></td><td class="mark">Pkm<i class="dot"></i></td><td></td><td>Double</td><td class="c"><input type="checkbox" checked disabled aria-label="Allow NULL"></td><td class="c"><input type="checkbox" aria-label="Highlight"></td><td></td><td></td><td></td><td></td><td class="rest"></td></tr>
          <tr class="new"><td class="rh"></td><td class="c"><input type="checkbox" checked aria-label="Visible"></td><td class="c"><input type="checkbox" aria-label="Read only"></td><td class="mark">ZH<i class="dot"></i></td><td></td><td>Text</td><td class="c"><input type="checkbox" checked disabled aria-label="Allow NULL"></td><td class="c"><input type="checkbox" aria-label="Highlight"></td><td></td><td></td><td></td><td class="num">55</td><td class="rest"></td></tr>
        </tbody>
      </table>
      <div class="addfield"><span></span>Click here to add a new field.</div>
      </div>
    </div>
  </section>
</section>

<aside class="right">
<div class="panel geo">
  <div class="phead"><h2>Geoprocessing</h2><button class="ic" aria-label="Options"><svg width="9" height="9"><use href="#chev"/></svg></button><button class="ic" aria-label="Pin"><svg width="8" height="12"><use href="#pin"/></svg></button><button class="ic" aria-label="Close"><svg width="12" height="12"><use href="#x"/></svg></button></div>
  <div class="gsearch"><button class="ic" aria-label="Back"><svg width="20" height="20" viewBox="0 0 20 20"><circle cx="10" cy="10" r="8.500" fill="none" stroke="#bbb" stroke-width="1.300"/><path d="M15 10H6m4-4l-4 4 4 4" fill="none" stroke="#bbb" stroke-width="1.500"/></svg></button>
    <div class="sbox"><input type="text" value="dissolve" aria-label="Find tools"><svg width="9" height="9" viewBox="0 0 9 9"><path d="M1 1l7 7m0-7L1 8" stroke="#444" stroke-width="1.800"/></svg><svg width="9" height="9"><use href="#chev"/></svg></div>
    <button class="ic" aria-label="Add"><svg width="20" height="20" viewBox="0 0 20 20"><circle cx="10" cy="10" r="8.700" fill="none" stroke="#777" stroke-width="1.300"/><path d="M10 4.500v11M4.500 10h11" stroke="#666" stroke-width="2"/></svg></button></div>
  <nav class="gtabs"><a href="#">Favorites</a><a href="#" class="on">Toolboxes</a><a href="#">Portal</a></nav>
  <div class="scrollrow">
    <ul class="tools-tree">
      <li class="l0 cut"><i></i></li>
      <li class="l0"><svg class="ar"><use href="#closed"/></svg><svg class="t"><use href="#case"/></svg>Crime Analysis and Safety Tools</li>
      <li class="l0"><svg class="ar"><use href="#closed"/></svg><svg class="t"><use href="#case"/></svg>Data Interoperability Tools</li>
      <li class="l0"><svg class="ar"><use href="#open"/></svg><svg class="t"><use href="#case"/></svg>Data Management Tools</li>
      <li><svg class="ar"><use href="#closed"/></svg><svg class="t"><use href="#set"/></svg>3D Objects</li>
      <li><svg class="ar"><use href="#closed"/></svg><svg class="t"><use href="#set"/></svg>Archiving</li>
      <li><svg class="ar"><use href="#closed"/></svg><svg class="t"><use href="#set"/></svg>Attachments</li>
      <li><svg class="ar"><use href="#closed"/></svg><svg class="t"><use href="#set"/></svg>Attribute Rules</li>
      <li><svg class="ar"><use href="#closed"/></svg><svg class="t"><use href="#set"/></svg>Contingent Values</li>
      <li><svg class="ar"><use href="#closed"/></svg><svg class="t"><use href="#set"/></svg>Data Comparison</li>
      <li><svg class="ar"><use href="#closed"/></svg><svg class="t"><use href="#set"/></svg>Distributed Geodatabase</li>
      <li><svg class="ar"><use href="#closed"/></svg><svg class="t"><use href="#set"/></svg>Domains</li>
      <li><svg class="ar"><use href="#closed"/></svg><svg class="t"><use href="#set"/></svg>Feature Binning</li>
      <li><svg class="ar"><use href="#closed"/></svg><svg class="t"><use href="#set"/></svg>Feature Class</li>
      <li><svg class="ar"><use href="#closed"/></svg><svg class="t"><use href="#set"/></svg>Features</li>
      <li><svg class="ar"><use href="#closed"/></svg><svg class="t"><use href="#set"/></svg>Fields</li>
      <li><svg class="ar"><use href="#closed"/></svg><svg class="t"><use href="#set"/></svg>File Geodatabase</li>
      <li><svg class="ar"><use href="#closed"/></svg><svg class="t"><use href="#set"/></svg>General</li>
      <li><svg class="ar"><use href="#open"/></svg><svg class="t"><use href="#set"/></svg>Generalization</li>
      <li class="l2 sel"><svg class="t"><use href="#hammer"/></svg>Dissolve</li>
      <li class="l2"><svg class="t"><use href="#hammer"/></svg>Eliminate</li>
      <li class="l2"><svg class="t"><use href="#hammer"/></svg>Eliminate Polygon Part</li>
      <li><svg class="ar"><use href="#closed"/></svg><svg class="t"><use href="#set"/></svg>Geodatabase Administration</li>
      <li><svg class="ar"><use href="#closed"/></svg><svg class="t"><use href="#set"/></svg>Indexes</li>
      <li><svg class="ar"><use href="#closed"/></svg><svg class="t"><use href="#set"/></svg>Joins and Relates</li>
      <li><svg class="ar"><use href="#closed"/></svg><svg class="t"><use href="#set"/></svg>LAS Dataset</li>
      <li><svg class="ar"><use href="#closed"/></svg><svg class="t"><use href="#set"/></svg>Layers and Table Views</li>
      <li><svg class="ar"><use href="#closed"/></svg><svg class="t"><use href="#set"/></svg>Package</li>
      <li><svg class="ar"><use href="#closed"/></svg><svg class="t"><use href="#set"/></svg>Photos</li>
      <li><svg class="ar"><use href="#closed"/></svg><svg class="t"><use href="#set"/></svg>Projections and Transformations</li>
      <li><svg class="ar"><use href="#closed"/></svg><svg class="t"><use href="#set"/></svg>Raster</li>
    </ul>
    <div class="vbar"><svg width="8" height="8" class="up"><use href="#chev"/></svg><div class="thumb mid"></div><svg width="8" height="8"><use href="#chev"/></svg></div>
  </div>
</div>
<nav class="btabs"><a href="#" class="on">Geoprocessing</a><a href="#">Symbology</a><a href="#">Catalog</a></nav>
</aside>
</main>
</div>
</body>
</html>
```
FILE: styles.css
```css
* { box-sizing: border-box; }
body { margin: 0; font: 12px/16px "Open Sans", "Noto Sans", sans-serif; color: #444; background: #eaeaea; }
button, input, select { font: inherit; color: inherit; }
button { border: 0; background: none; padding: 0; }
a { color: inherit; text-decoration: none; }
ul { list-style: none; margin: 0; padding: 0; }
h2, h3, h4 { margin: 0; font-weight: 400; }
svg { flex: none; display: block; }
.defs { position: absolute; width: 0; height: 0; }
.ic { display: flex; align-items: center; justify-content: center; flex: none; }
.sep { width: 1px; height: 16px; background: #aaa; flex: none; }
.dot { width: 12px; height: 12px; border-radius: 50%; background: #000; }

.app { height: 100vh; display: flex; flex-direction: column; overflow: hidden; border-right: 1px solid #8a8a8a; border-bottom: 1px solid #b5b5b5; }

/* title bar */
.titlebar { display: grid; grid-template-columns: 1fr auto 1fr; align-items: center; height: 31px; background: #f7f9f9; flex: none; }
.quick { display: flex; align-items: center; padding-left: 7px; gap: 12px; }
.quick .arrow { margin: 0 -2px 0 -4px; }
.quick .custom { margin-left: 4px; }
.titlemid { display: flex; align-items: center; gap: 10px; color: #777; }
.cmd { display: flex; align-items: center; gap: 6px; width: 180px; height: 24px; margin-right: 6px; padding: 0 6px; border: 1px solid #aaa; border-radius: 3px; color: #555; }
.cmd input { border: 0; background: none; width: 100%; padding: 0; font-size: 11px; font-style: italic; outline: 0; }
.cmd input::placeholder { color: #8a8a8a; }
.wincontrols { display: flex; justify-content: flex-end; gap: 32px; padding-right: 14px; }
.help { font-size: 14px; color: #555; margin: 0 2px 0 -6px; }

.tabs { display: flex; align-items: center; height: 26px; background: #f7f9f9; padding: 0 17px; gap: 31px; font-size: 13px; color: #222; flex: none; }
.tabs a { line-height: 22px; border-bottom: 3px solid transparent; }
.tabs .on { font-weight: 600; border-color: #0079c1; }
.ctx { display: flex; align-items: center; gap: 29px; height: 25px; padding: 0 15px; background: #fff; border: 1px solid #e2e4e4; border-radius: 3px; }
.ctx a { border: 0; }

/* ribbon */
.ribbon { display: flex; height: 95px; padding: 3px 0 4px; background: #f7f9f9; border-bottom: 1px solid #cdd0d0; flex: none; }
.group { display: flex; flex-direction: column; justify-content: space-between; border-right: 1px solid #bbb; flex: none; }
.group > :first-child { padding-top: 1px; }
.group h3 { text-align: center; color: #666; font-size: 11px; line-height: 10px; }
.g-clip { width: 114px; padding-left: 9px; }
.g-design { width: 243px; }
.g-filter { width: 247px; }
.g-order { width: 129px; }
.g-changes { width: 91px; }
.g-eng { width: 91px; }
.tools { display: flex; justify-content: center; }
.g-clip .tools, .g-order .tools { justify-content: flex-start; gap: 5px; }
.g-order .tools { padding-left: 10px; }
.big { display: flex; flex-direction: column; align-items: center; gap: 3px; font-size: 12px; line-height: 15px; padding-top: 2px; }
.g-design .big { width: 54px; }
.g-design .big:last-child { width: 66px; }
.g-clip .big { width: 34px; }
.g-changes .big { width: 38px; }
.g-eng .big { width: 80px; }
.dim { color: #aaa; }
.small { display: flex; align-items: center; gap: 4px; height: 24px; white-space: nowrap; }
.filters { display: grid; grid-template-columns: 83px 152px; row-gap: 2px; padding-left: 5px; align-items: center; white-space: nowrap; }
.filters input { height: 22px; border: 1px solid #aaa; background: #fff; min-width: 0; }
.collapse { margin: auto 6px 0 auto; }

/* work area */
.work { flex: 1; min-height: 0; display: flex; gap: 6px; padding: 6px 5px 6px 6px; }
.panel { background: #f7f9f9; border: 1px solid #d9dada; border-radius: 3px; display: flex; flex-direction: column; min-height: 0; }
.phead { display: flex; align-items: center; gap: 11px; height: 31px; padding: 0 6px 3px 5px; flex: none; color: #555; }
.phead h2 { flex: 1; font-size: 15px; color: #222; }
.contents { width: 334px; flex: none; margin-top: 1px; }
.csearch { display: flex; gap: 6px; padding: 0 2px 0 3px; flex: none; }
.sbox { flex: 1; display: flex; align-items: center; gap: 13px; height: 24px; padding: 0 6px; background: #fff; border: 1px solid #999; color: #555; }
.sbox input { flex: 1; min-width: 0; border: 0; outline: 0; background: none; padding: 0; }
.sbox input::placeholder { font-style: italic; color: #666; }
.ctabs { display: flex; align-self: flex-start; margin: 8px 0 0 14px; border-bottom: 1px solid #ccc; flex: none; }
.ctabs button { width: 32px; height: 33px; display: flex; align-items: flex-start; justify-content: center; }
.ctabs .on { border-bottom: 3px solid #0079c1; }
.contents h4 { font-size: 14px; line-height: 20px; padding: 12px 0 4px 14px; flex: none; color: #444; }
.scrollrow { flex: 1; display: flex; min-height: 0; }
.ctree { flex: 1; min-width: 0; overflow: hidden; color: #555; }
.crow { display: flex; align-items: center; height: 24px; gap: 5px; }
.lvl0 { padding-left: 2px; height: 26px; padding-top: 3px; }
.lvl1 { padding-left: 13px; gap: 2px; }
.crow label { flex: 1; display: flex; align-items: center; gap: 5px; height: 24px; border: 1px solid transparent; padding-left: 1px; }
.crow .sel { background: #c5dbee; border-color: #62a8dc; }
.symbol { height: 24px; padding: 3px 0 0 27px; }
.symbol i { display: block; width: 21px; height: 16px; border: 2px solid #222; }
.field { padding-left: 27px; line-height: 21px; font-weight: 600; color: #444; }
.legend { padding-top: 2px; }
.legend li { display: flex; align-items: center; gap: 7px; height: 19px; padding-left: 28px; white-space: nowrap; }
.legend li:nth-child(5n), .legend li:nth-child(5n+3) { height: 20px; }
.legend i { width: 19px; height: 15px; border: 1px solid #ffffff66; }
.vbar { width: 17px; background: #efefef; display: flex; flex-direction: column; align-items: center; padding: 5px 0; flex: none; color: #666; }
.vbar svg:last-child { margin-top: auto; }
.up { transform: rotate(180deg); }
.lf { transform: rotate(90deg); }
.rt { transform: rotate(-90deg); }
.thumb { width: 9px; border-radius: 5px; background: #b2b2b2; }
.long { height: 76%; margin-top: 6px; }
.mid { height: 39%; margin-top: 62px; }

input[type=checkbox] { appearance: none; width: 13px; height: 13px; margin: 0; border: 1px solid #777; border-radius: 2px; background: #fff; flex: none; position: relative; vertical-align: middle; }
input[type=checkbox]:checked::after { content: ""; position: absolute; left: 3px; top: 0; width: 5px; height: 9px; border: solid #444; border-width: 0 2px 2px 0; transform: rotate(40deg); }
input[type=checkbox].mixed::after { content: ""; position: absolute; inset: 2px; background: #444; }
input[type=checkbox]:disabled { border-color: #d8dadd; background: #f1f2f4; }
input[type=checkbox]:checked:disabled::after { border-color: #b5b8bb; }

select { appearance: none; border: 1px solid #999; border-radius: 0; padding: 0 16px 0 3px; background: #fff url("data:image/svg+xml,%3Csvg xmlns='http://www.w3.org/2000/svg' width='6' height='5'%3E%3Cpath d='M0 0h6L3 4.500z' fill='%23444'/%3E%3C/svg%3E") no-repeat right 4px center; }

/* centre */
.center { flex: 1; min-width: 0; display: flex; flex-direction: column; position: relative; }
.dtabs { display: flex; align-items: flex-end; justify-content: space-between; height: 26px; border-bottom: 3px solid #d2d3d8; flex: none; }
.dtab { display: flex; align-items: center; gap: 5px; height: 23px; padding: 0 5px; background: #d2d3d8; border-radius: 3px 3px 0 0; color: #555; white-space: nowrap; }
.dtab .ic { margin-left: 3px; color: #666; }
.more { padding: 0 5px 7px 0; color: #666; }
.mapview { height: 460px; background: #fff; overflow: hidden; flex: none; margin: 0 1px; }
.mapview svg { width: 100%; height: 100%; }
.mapview text { font-size: 13px; fill: #000; }
.mapbar { display: flex; align-items: center; gap: 5px; height: 25px; padding: 0 5px; background: #f7f9f9; border-bottom: 1px solid #d2d3d3; flex: none; margin: 0 1px; color: #555; }
.mapbar select { width: 100px; height: 21px; padding-left: 6px; }
.act { background: #9fd4f5; width: 20px; height: 21px; }
.coords { margin: 0 auto; display: flex; align-items: center; gap: 8px; }
.selfeat { display: flex; align-items: center; gap: 4px; color: #aaa; }
.second { margin-top: 6px; }
.tpane { flex: 1; min-height: 0; display: flex; flex-direction: column; margin: 0 1px; background: #fff; border: 1px solid #d6d7da; border-top: 0; }
.ttools { display: flex; align-items: center; height: 31px; margin: 1px 1px 2px; padding: 0 7px 0 5px; gap: 7px; background: #eeeff1; border: 1px solid #cfd0d5; color: #555; flex: none; white-space: nowrap; }
.ttools b { font-weight: 600; color: #333; }
.tb { display: flex; align-items: center; gap: 4px; position: relative; }
.off { color: #bbb; }
.add .dot { position: absolute; left: 18px; top: 14px; z-index: 2; }
.menu { margin-left: auto; }
.tbody { flex: 1; min-height: 0; display: flex; }
.tscroll { flex: 1; padding-left: 2px; }
.faint { background: #fafafa; color: #ccc; }
.hbar { height: 18px; background: #f4f4f4; color: #ccc; display: flex; justify-content: space-between; align-items: center; padding: 0 22px 0 4px; flex: none; }
.attrs { width: 322px; table-layout: fixed; border-collapse: collapse; font-size: 11px; color: #555; white-space: nowrap; }
.attrs th, .attrs td { height: 25px; padding: 0 4px; border: 1px solid #d5d5d5; text-align: left; font-weight: 400; }
.attrs th { background: #eaeaea; font-weight: 600; color: #444; border-top: 0; padding: 0 2px 0 3px; }
.attrs .rh { width: 16px; padding: 0; text-align: center; background: #c8e2f5; border-right: 2px solid #2f86c6; border-left: 0; }
.attrs th.rh { background: #fff; border: 0; vertical-align: bottom; padding: 0 0 4px 3px; }
.attrs .key { width: 67px; background: #c8e2f5; }
.attrs th.key { border-bottom: 2px solid #2f86c6; }
.attrs .shape { width: 48px; }
.attrs .len { width: 91px; }
.attrs .num { text-align: right; }
.tstatus { display: flex; align-items: center; height: 28px; padding: 0 5px 0 2px; gap: 8px; background: #f7f9f9; border-bottom: 1px solid #d6d7da; margin: 0 1px; flex: none; color: #555; white-space: nowrap; }
.view { width: 32px; height: 23px; display: flex; align-items: center; justify-content: center; margin-right: -6px; color: #666; }
.view + .view { margin-right: 0; }
.view.on { background: #c3c4c8; border: 1px solid #4a9fdc; }
.nav { margin: 0 3px; }
.fl { margin-left: auto; margin-right: -3px; }
.flt { display: flex; gap: 3px; background: #eeefef; margin-right: -3px; }
.minus { margin-left: 5px; }
.zoom { appearance: none; width: 100px; height: 14px; margin: 0; background: linear-gradient(#999, #999) center / 100% 2px no-repeat; }
.zoom::-webkit-slider-thumb { appearance: none; width: 3px; height: 12px; background: #666; }
.pct { width: 60px; height: 24px; border: 0; padding-left: 7px; }
.tstatus .sep { margin: 0 -2px; }

/* floating fields window */
.dialog { position: absolute; left: 9px; right: -8px; top: 115px; z-index: 5; background: #eeeff1; border: 1px solid #b5b6b8; border-radius: 8px; box-shadow: 0 1px 5px #0002; padding-bottom: 6px; }
.dhead { display: flex; align-items: center; gap: 32px; height: 29px; padding: 0 15px 0 8px; background: #f6f8f8; border-radius: 8px 8px 0 0; color: #777; }
.dhead span { flex: 1; }
.dialog .dtabs { height: 31px; margin: 0 6px; }
.dbody { margin: 0 6px; padding-left: 1px; background: #f9f9fa; border: 1px solid #d2d3d8; border-top: 0; }
.layerrow { display: flex; align-items: center; height: 48px; padding-left: 10px; }
.layerrow label { width: 109px; }
.layerrow select { width: 200px; height: 25px; color: #333; }
.fwrap { border: 1px solid #cfd0d4; background: #fff; padding-bottom: 14px; margin-bottom: 1px; }
.fields { width: 100%; table-layout: fixed; border-collapse: separate; border-spacing: 0; }
.w20 { width: 20px; } .w50 { width: 50px; } .w53 { width: 53px; } .w56 { width: 56px; } .w67 { width: 67px; } .w72 { width: 72px; } .w79 { width: 79px; } .w80 { width: 80px; } .w82 { width: 82px; } .w86 { width: 86px; } .w93 { width: 93px; }
.fields th { height: 22px; padding: 0 0 0 6px; background: #dedede; border-right: 1px solid #c8c8c8; border-bottom: 1px solid #ccc; font-weight: 400; font-size: 11px; text-align: left; white-space: nowrap; }
.fields th label { display: flex; align-items: center; gap: 6px; }
.fields .corner { background: #eeeff1; padding: 8px 0 0 12px; }
.fields th.rest { background: #eeeff1; }
.fields td { height: 24px; padding: 0 0 0 1px; border-right: 1px solid #d0d0d0; border-bottom: 2px solid #cfcfcf; background: #fff; color: #333; white-space: nowrap; }
.fields tr:nth-child(even) td { background: #eaeaea; }
.fields td.rh { background: #eaeaea; border-right-width: 1px; }
.fields .c { text-align: center; padding: 0; line-height: 13px; }
.fields td.ro { color: #999; }
.fields td.rest { border-right: 0; }
.fields .new td:not(.rest) { background: #9fd4f2; border-right: 2px solid #f4f8fa; }
.fields .new td.rh:not(.rest) { background: #98c598; border-bottom-color: #86ab86; }
.fields .new .c input { border-color: #8a9aa4; }
.fields .new .c input:not(:checked) { background: none; }
.fields .new .c input:disabled { background: #cfe4f0; border-color: #b5cbd8; }
.fields td.num { text-align: right; padding-right: 1px; }
.mark .dot { float: right; margin: 0 24px 0 0; }
.addfield { display: flex; align-items: center; height: 24px; margin-top: 3px; background: #eaeaea; border: solid #cfcfcf; border-width: 1px 0; color: #444; }
.addfield span { width: 20px; height: 22px; border-right: 1px solid #ccc; margin-right: 3px; }

/* geoprocessing */
.right { width: 384px; flex: none; display: flex; flex-direction: column; min-height: 0; margin: 1px 0 0 1px; }
.geo { flex: 1; border-radius: 3px 3px 0 0; border-bottom: 0; }
.gsearch { display: flex; gap: 5px; padding: 0 6px; flex: none; }
.gsearch .sbox { border: 1px solid #2f86c6; }
.gtabs { display: flex; gap: 12px; padding: 13px 9px 0; height: 40px; flex: none; }
.gtabs a { line-height: 22px; height: 24px; border-bottom: 2px solid transparent; }
.gtabs .on { font-weight: 600; border-color: #0079c1; }
.tools-tree { flex: 1; min-width: 0; overflow: hidden; color: #555; }
.tools-tree li { display: flex; align-items: center; height: 25px; padding-left: 24px; white-space: nowrap; }
.tools-tree li:nth-child(7n) { height: 26px; }
.tools-tree .l0 { padding-left: 8px; }
.tools-tree .cut { height: 8px; align-items: flex-start; }
.cut i { width: 16px; height: 1px; background: #e3b0a0; margin-left: 13px; }
.tools-tree .l2 { margin-left: 48px; padding-left: 4px; }
.tools-tree .l2.sel { background: #c5dbee; border: 1px solid #62a8dc; padding-left: 3px; }
.ar { width: 7px; height: 9px; margin-right: 6px; }
.t { width: 16px; height: 15px; margin-right: 4px; }
.btabs { display: flex; gap: 8px; height: 23px; flex: none; }
.btabs a { line-height: 24px; }
.btabs .on { background: #f7f9f9; color: #2f86c6; padding: 0 4px; border-radius: 0 0 3px 3px; }
```
